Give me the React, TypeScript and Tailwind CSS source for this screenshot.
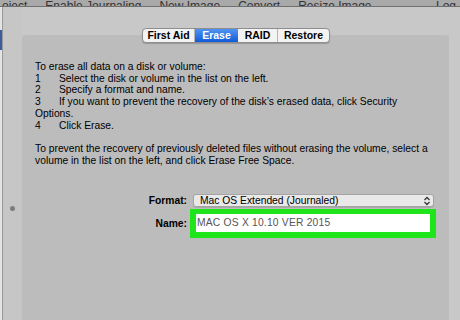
export default function App() {
  const steps: [string, string][] = [
    ["1", "Select the disk or volume in the list on the left."],
    ["2", "Specify a format and name."],
    ["3", "If you want to prevent the recovery of the disk’s erased data, click Security"],
  ];

  return (
    <div
      className="relative h-[320px] w-[460px] overflow-hidden bg-[#c8c8c8] text-black"
      style={{ fontFamily: '"Liberation Sans", Arial, sans-serif' }}
    >
      {/* top toolbar, cut off by the crop */}
      <div className="flex h-[7px] items-end justify-between overflow-hidden border-b border-[#6f6f6f] bg-[#a9a9a9] px-[2px] text-[12px] leading-[12px] text-[#333]">
        <div className="-mb-[6px] flex gap-[18px] whitespace-nowrap">
          <span>oject</span>
          <span>Enable Journaling</span>
          <span>New Image</span>
          <span>Convert</span>
          <span>Resize Image</span>
        </div>
        <span className="-mb-[6px] pr-[2px]">Log</span>
      </div>

      <div className="flex h-[313px]">
        {/* sidebar edge */}
        <div className="flex w-[3px] flex-col border-r border-[#9a9a9a] bg-[#e4e4e4]">
          <div className="mt-[23px] h-[20px] bg-[#3a5c9c]" />
        </div>

        {/* splitter gutter */}
        <div className="relative w-[19px] bg-[#c6c6c6]">
          <div className="absolute left-[7px] top-[199px] h-[5px] w-[5px] rounded-full bg-[#7c7c7c]" />
        </div>

        {/* main area */}
        <div className="relative flex-1 pt-[28px]">
          {/* tabs */}
          <div className="absolute left-[120px] top-[21px] z-10 flex h-[15px] overflow-hidden rounded-[4px] border border-[#8e8e8e] bg-[#f3f3f3] text-[10.5px] font-bold leading-[13px] shadow-[0_1px_1px_rgba(0,0,0,0.2)]">
            <div className="w-[52px] border-r border-[#b5b5b5] text-center">First Aid</div>
            <div className="w-[43px] bg-gradient-to-b from-[#4f93f1] to-[#0f5ad8] text-center text-white">Erase</div>
            <div className="w-[40px] border-r border-[#b5b5b5] text-center">RAID</div>
            <div className="w-[51px] text-center">Restore</div>
          </div>

          <div className="mr-[11px] h-[300px] rounded-[3px] bg-[#bcbcbc] pl-[13px] pr-[8px] pt-[26px] text-[10.3px] leading-[11.7px]">
            <p>To erase all data on a disk or volume:</p>
            {steps.map(([n, t]) => (
              <div key={n} className="flex">
                <span className="w-[24px] shrink-0">{n}</span>
                <span>{t}</span>
              </div>
            ))}
            <p>Options.</p>
            <div className="flex">
              <span className="w-[24px] shrink-0">4</span>
              <span>Click Erase.</span>
            </div>
            <p className="mt-[11.7px]">
              To prevent the recovery of previously deleted files without erasing the volume, select a
              <br />
              volume in the list on the left, and click Erase Free Space.
            </p>

            {/* form */}
            <div className="mt-[28px] flex flex-col">
              <div className="flex items-center">
                <span className="w-[158px] pr-[6px] text-right font-bold">Format:</span>
                <div className="flex h-[13px] w-[241px] items-center justify-between rounded-[3px] border border-[#a4a4a4] bg-[#e9e9e9] pl-[6px] pr-[2px] text-[10.3px] leading-[12px] shadow-[0_1px_0_rgba(0,0,0,0.1)]">
                  <span>Mac OS Extended (Journaled)</span>
                  <svg width="8" height="10" viewBox="0 0 8 10" fill="none" stroke="#333" strokeWidth="1.3">
                    <path d="M1.5 4 L4 1.5 L6.5 4" />
                    <path d="M1.5 6 L4 8.5 L6.5 6" />
                  </svg>
                </div>
              </div>
              <div className="mt-[2px] flex items-center">
                <span className="w-[158px] pr-[6px] text-right font-bold">Name:</span>
                <div className="-ml-[3px] h-[29px] w-[246px] bg-[#1ee61a] px-[6px] py-[5px]">
                  <div className="flex h-[18px] items-center bg-white pl-[1px] text-[10.3px] tracking-[0.2px] text-[#555]">
                    MAC OS X 10.10 VER 2015
                  </div>
                </div>
              </div>
            </div>
          </div>
        </div>
      </div>
    </div>
  );
}
